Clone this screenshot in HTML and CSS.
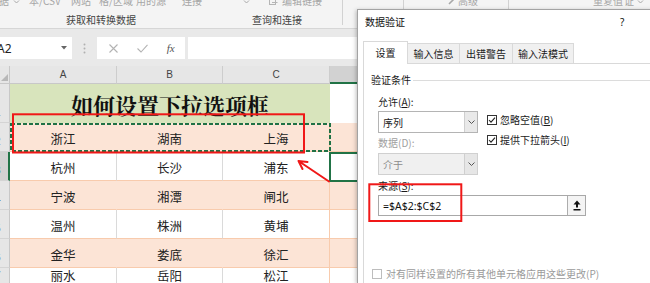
FILE: index.html
```html
<!DOCTYPE html>
<html lang="zh-CN">
<head>
<meta charset="utf-8">
<title>数据验证</title>
<link rel="stylesheet" href="styles.css">
</head>
<body>
<header class="ribbon">
  <div class="grp g1">
    <div class="rtop">
      <span class="ri t-ju">据</span>
      <svg class="ri chev t-ch1" width="8" height="12" viewBox="0 0 8 12"><path d="M1 5.5 L3.5 8 L6 5.5" fill="none" stroke="#a8a8a8"/></svg>
      <span class="ri t-csv">本/CSV</span>
      <span class="ri t-web">网站</span>
      <span class="ri t-rng">格/区域</span>
      <span class="ri t-src">用的源</span>
      <span class="ri t-con">连接</span>
    </div>
    <div class="rlabel">获取和转换数据</div>
  </div>
  <div class="grp g2">
    <div class="rtop">
      <svg class="ri chev t-ch2" width="8" height="12" viewBox="0 0 8 12"><path d="M1 5.5 L3.5 8 L6 5.5" fill="none" stroke="#a8a8a8"/></svg>
      <svg class="ri t-lnk" width="9" height="12" viewBox="0 0 9 12"><rect x="0.5" y="2.5" width="6" height="7" fill="none" stroke="#b5b5b5"/><path d="M3 7.5 H8.5" stroke="#b5b5b5"/></svg>
      <span class="ri t-edit">编辑链接</span>
    </div>
    <div class="rlabel">查询和连接</div>
  </div>
  <div class="grp g3">
    <div class="rtop">
      <span class="ri t-sep"></span>
      <svg class="ri t-pen" width="8" height="12" viewBox="0 0 8 12"><path d="M1 9 L6.5 3.5" stroke="#a8a8a8" stroke-width="1.6"/></svg>
      <span class="ri t-adv">高级</span>
    </div>
  </div>
  <div class="grp g4">
    <div class="rtop">
      <span class="ri t-dup">重复值</span>
      <span class="ri t-zh">证</span>
      <svg class="ri chev t-ch3" width="8" height="12" viewBox="0 0 8 12"><path d="M1 5.5 L3.5 8 L6 5.5" fill="none" stroke="#a8a8a8"/></svg>
    </div>
  </div>
</header>

<div class="fbar">
  <div class="namebox">
    <span class="nm">A2</span>
    <svg width="6" height="4" viewBox="0 0 6 4"><path d="M0 0 H6 L3 3.5 Z" fill="#666"/></svg>
  </div>
  <div class="fdots">
    <svg width="3" height="11" viewBox="0 0 3 11"><circle cx="1.5" cy="1.5" r="1" fill="#b0b0b0"/><circle cx="1.5" cy="5.5" r="1" fill="#b0b0b0"/><circle cx="1.5" cy="9.5" r="1" fill="#b0b0b0"/></svg>
  </div>
  <div class="fxbox">
    <span class="fxi"><svg width="9" height="9" viewBox="0 0 9 9"><path d="M0.5 0.5 L8.5 8.5 M8.5 0.5 L0.5 8.5" stroke="#b3b3b3" stroke-width="1.1"/></svg></span>
    <span class="fxi"><svg width="11" height="9" viewBox="0 0 11 9"><path d="M0.5 4.5 L4 8 L10.5 0.8" fill="none" stroke="#b3b3b3" stroke-width="1.1"/></svg></span>
    <span class="fxi fx">fx</span>
  </div>
  <div class="fin"></div>
</div>

<main class="sheet">
  <div class="corner"><svg width="7" height="7" viewBox="0 0 7 7"><path d="M7 0 V7 H0 Z" fill="#b8b8b8"/></svg></div>
  <div class="ch">A</div>
  <div class="ch">B</div>
  <div class="ch">C</div>
  <div class="ch chsel"></div>

  <div class="rh"><span>1</span></div>
  <div class="title">如何设置下拉选项框</div>
  <div class="c d dw"></div>

  <div class="rh"><span>2</span></div>
  <div class="c pe">浙江</div>
  <div class="c pe">湖南</div>
  <div class="c pe cc">上海</div>
  <div class="c pe d"></div>

  <div class="rh rhsel"><span>3</span></div>
  <div class="c">杭州</div>
  <div class="c">长沙</div>
  <div class="c cc">浦东</div>
  <div class="c d"></div>

  <div class="rh"><span>4</span></div>
  <div class="c pe">宁波</div>
  <div class="c pe">湘潭</div>
  <div class="c pe cc">闸北</div>
  <div class="c pe d"></div>

  <div class="rh"><span>5</span></div>
  <div class="c">温州</div>
  <div class="c">株洲</div>
  <div class="c cc">黄埔</div>
  <div class="c d"></div>

  <div class="rh"><span>6</span></div>
  <div class="c pe">金华</div>
  <div class="c pe">娄底</div>
  <div class="c pe cc">徐汇</div>
  <div class="c pe d"></div>

  <div class="rh rh7"><span>7</span></div>
  <div class="c r7">丽水</div>
  <div class="c r7">岳阳</div>
  <div class="c r7 cc">松江</div>
  <div class="c d r7"></div>
</main>

<svg class="ovl-sheet" width="650" height="283" viewBox="0 0 650 283">
  <rect x="11" y="124" width="319" height="27" fill="none" stroke="#1f7145" stroke-width="2" stroke-dasharray="4 2"/>
  <rect x="330" y="153" width="40" height="28" fill="none" stroke="#217346" stroke-width="2"/>
</svg>

<section class="dlg">
  <div class="dtitle"><span>数据验证</span><span class="dq">?</span></div>
  <div class="tabs">
    <div class="tab on w1">设置</div>
    <div class="tab w2">输入信息</div>
    <div class="tab w3">出错警告</div>
    <div class="tab w4">输入法模式</div>
  </div>
  <div class="panel">
    <div class="ghead"><span>验证条件</span><i class="gline"></i></div>
    <div class="form">
      <div class="lbl first">允许(<u>A</u>):</div>
      <div class="frow">
        <div class="lcol">
          <div class="sel"><span class="sv">序列</span><span class="sb"><svg width="7" height="4" viewBox="0 0 7 4"><path d="M0.5 0.5 L3.5 3.5 L6.5 0.5" fill="none" stroke="#555"/></svg></span></div>
          <div class="lbl dis gap4">数据(D):</div>
          <div class="sel seldis gap4"><span class="sv">介于</span><span class="sb"><svg width="7" height="4" viewBox="0 0 7 4"><path d="M0.5 0.5 L3.5 3.5 L6.5 0.5" fill="none" stroke="#555"/></svg></span></div>
        </div>
        <div class="rcol">
          <div class="chk"><svg width="10" height="10" viewBox="0 0 10 10"><rect x="0.5" y="0.5" width="9" height="9" fill="#fff" stroke="#333"/><path d="M2 5 L4 7.2 L8 2.6" fill="none" stroke="#222" stroke-width="1.1"/></svg><span>忽略空值(<u>B</u>)</span></div>
          <div class="chk chk2"><svg width="10" height="10" viewBox="0 0 10 10"><rect x="0.5" y="0.5" width="9" height="9" fill="#fff" stroke="#333"/><path d="M2 5 L4 7.2 L8 2.6" fill="none" stroke="#222" stroke-width="1.1"/></svg><span>提供下拉箭头(<u>I</u>)</span></div>
        </div>
      </div>
      <div class="lbl srcl">来源(<u>S</u>):</div>
      <div class="src">
        <span class="sval">=$A$2:$C$2</span>
        <span class="sbtn"><svg width="8" height="11" viewBox="0 0 8 11"><path d="M4 0.5 L7.5 4.5 H5 V7.5 H3 V4.5 H0.5 Z" fill="#111"/><rect x="0.5" y="9" width="7" height="1.5" fill="#111"/></svg></span>
      </div>
      <div class="chk bchk"><svg width="10" height="10" viewBox="0 0 10 10"><rect x="0.5" y="0.5" width="9" height="9" fill="#fff" stroke="#bdbdbd"/></svg><span>对有同样设置的所有其他单元格应用这些更改(P)</span></div>
    </div>
  </div>
</section>

<svg class="ovl-ann" width="650" height="283" viewBox="0 0 650 283">
  <rect x="13" y="114.3" width="291" height="38.2" fill="none" stroke="#f01818" stroke-width="2"/>
  <path d="M329 181.5 L298.5 161 M298.5 161 L307.5 162 M298.5 161 L302.5 169" fill="none" stroke="#f01818" stroke-width="2" stroke-linecap="round"/>
  <rect x="369.3" y="184.3" width="92" height="36.7" fill="none" stroke="#f01818" stroke-width="2"/>
</svg>
</body>
</html>
```

FILE: styles.css
```css
* { box-sizing: border-box; margin: 0; padding: 0; }
html, body { width: 650px; height: 283px; overflow: hidden; }
body {
  position: relative;
  background: #e9e9e9;
  font-family: "Noto Sans CJK SC", "Noto Sans", sans-serif;
  font-size: 10px;
  color: #222;
}

/* ribbon */
.ribbon {
  display: flex;
  height: 29px;
  background: #f4f4f4;
  border-bottom: 1px solid #d6d6d6;
  overflow: hidden;
}
.grp { flex: none; height: 25px; display: flex; flex-direction: column; }
.g1 { width: 212px; padding-right: 10px; }
.g2 { width: 131px; border-right: 1px solid #d2d2d2; }
.g3 { width: 166px; border-right: 1px solid #d2d2d2; }
.g4 { flex: 1; }
.rtop {
  display: flex;
  height: 12px;
  margin-top: -5px;
  line-height: 12px;
  color: #a6a6a6;
  white-space: nowrap;
}
.ri { flex: none; display: block; }
.rlabel {
  margin-top: 7px;
  height: 12px;
  line-height: 12px;
  text-align: center;
  color: #444;
  white-space: nowrap;
}
.t-ju { margin-left: -1px; width: 10px; }
.t-ch1 { margin-left: 4px; }
.t-csv { margin-left: 8px; width: 34px; }
.t-web { margin-left: 8px; width: 20px; }
.t-rng { margin-left: 8px; width: 35px; }
.t-src { margin-left: 2px; width: 30px; }
.t-con { margin-left: 16px; width: 20px; }
.t-ch2 { margin-left: 31px; }
.t-lnk { margin-left: 18px; }
.t-edit { margin-left: 4px; width: 40px; }
.t-sep { margin-left: 60px; width: 1px; height: 14px; background: #d2d2d2; }
.t-pen { margin-left: 44px; }
.t-adv { margin-left: 2px; width: 22px; }
.t-dup { margin-left: 84px; width: 30px; }
.t-zh { margin-left: 1px; width: 10px; }
.t-ch3 { margin-left: 3px; }

/* formula bar */
.fbar { display: flex; height: 22px; margin-top: 8px; }
.namebox {
  width: 72px;
  background: #fff;
  display: flex;
  align-items: center;
  justify-content: space-between;
  padding-right: 5px;
  font-family: "Noto Sans", sans-serif;
  font-size: 12px;
  color: #222;
  overflow: hidden;
}
.nm { margin-left: -3px; }
.fdots { width: 25px; display: flex; align-items: center; justify-content: center; }
.fxbox { width: 88px; background: #fff; display: flex; align-items: center; padding-left: 2px; }
.fxi { width: 29px; display: flex; align-items: center; justify-content: center; }
.fx {
  font-family: "Liberation Serif", serif;
  font-style: italic;
  font-size: 11px;
  color: #555;
}
.fin { flex: 1; margin-left: 3px; background: #fff; }

/* sheet */
.sheet {
  display: grid;
  grid-template-columns: 10px 107px 106px 107px 1fr;
  grid-template-rows: 18px 39px repeat(5, 29px) 15px;
  margin-top: 7px;
}
.corner {
  background: #e6e6e6;
  border-right: 1px solid #c8c8c8;
  border-bottom: 1px solid #c8c8c8;
  display: flex;
  align-items: flex-end;
  justify-content: flex-end;
  padding: 0 1px 2px 0;
}
.ch {
  background: #e6e6e6;
  border-right: 1px solid #cdcdcd;
  border-bottom: 1px solid #c8c8c8;
  display: flex;
  align-items: center;
  justify-content: center;
  font-family: "Liberation Sans", sans-serif;
  font-size: 10px;
  color: #444;
}
.chsel { background: #d2d2d2; border-right: none; border-bottom: 2px solid #217346; }
.rh {
  background: #e6e6e6;
  border-right: 1px solid #c8c8c8;
  border-bottom: 1px solid #d4d4d4;
  display: flex;
  align-items: flex-end;
  padding-bottom: 4px;
  overflow: hidden;
  font-family: "Liberation Sans", sans-serif;
  font-size: 10px;
  line-height: 11px;
  color: #444;
}
.rh span { margin-left: -5px; }
.rh7 { align-items: flex-start; padding: 2px 0 0; border-bottom: none; }
.rhsel { background: #d2d2d2; color: #217346; border-right: 2px solid #217346; }
.title {
  grid-column: span 3;
  background: #d8e4bc;
  display: flex;
  align-items: center;
  justify-content: center;
  padding-top: 2px;
  font-family: "Noto Serif CJK SC", "Noto Sans CJK SC", serif;
  font-size: 22px;
  font-weight: 700;
  color: #111;
}
.c {
  display: flex;
  align-items: center;
  justify-content: center;
  padding-top: 2px;
  background: #fff;
  border-right: 1px solid #dadada;
  border-bottom: 1px solid #f8cbad;
  font-size: 12.5px;
  color: #222;
}
.pe { background: #fce4d6; border-right-color: #fce4d6; }
.cc { border-right-color: #f8cbad; }
.d { border-right: none; }
.dw { border-bottom: none; }
.r7 { align-items: flex-start; padding-top: 1px; border-bottom: none; line-height: 14px; }

.ovl-sheet { position: absolute; left: 0; top: 0; z-index: 2; pointer-events: none; }
.ovl-ann { position: absolute; left: 0; top: 0; z-index: 10; pointer-events: none; }

/* dialog */
.dlg {
  position: absolute;
  left: 357px;
  top: 9px;
  width: 310px;
  height: 274px;
  z-index: 5;
  background: #fff;
  border: 1px solid #a3a3a3;
  border-bottom: none;
  box-shadow: -1px 1px 4px rgba(0, 0, 0, 0.25);
  color: #1a1a1a;
  overflow: hidden;
}
.dtitle {
  height: 23px;
  display: flex;
  align-items: center;
  padding-left: 7px;
  font-size: 10px;
  color: #111;
}
.dq { margin-left: auto; margin-right: 40px; width: 6px; font-family: "Noto Sans", sans-serif; }
.tabs { display: flex; align-items: flex-end; height: 22px; margin: 8px 0 0 5px; position: relative; z-index: 1; }
.tab {
  height: 20px;
  background: #f0f0f0;
  border: 1px solid #d9d9d9;
  border-left: none;
  border-bottom: none;
  display: flex;
  align-items: center;
  justify-content: center;
  white-space: nowrap;
}
.tab.on { height: 23px; margin-bottom: -1px; background: #fff; border-left: 1px solid #d9d9d9; padding-bottom: 1px; }
.w1 { width: 45px; }
.w2 { width: 52px; }
.w3 { width: 53px; }
.w4 { width: 61px; }
.panel {
  margin-left: 5px;
  width: 300px;
  height: 220px;
  border: 1px solid #d9d9d9;
  border-bottom: none;
}
.ghead {
  display: flex;
  align-items: center;
  height: 12px;
  margin-top: 10px;
  padding-left: 7px;
  line-height: 12px;
}
.gline { flex: 1; height: 1px; margin-left: 2px; background: #dcdcdc; }
.form { padding-left: 14px; }
.lbl { height: 12px; line-height: 12px; white-space: nowrap; }
.lbl.first { margin-top: 10px; }
.lbl.dis { color: #a0a0a0; }
.gap4 { margin-top: 4px; }
.frow { display: flex; margin-top: 3px; }
.lcol { width: 100px; display: flex; flex-direction: column; }
.sel {
  height: 22px;
  display: flex;
  border: 1px solid #b4b4b4;
  background: #fff;
}
.sv { flex: 1; display: flex; align-items: center; padding-left: 4px; }
.sb {
  width: 13px;
  display: flex;
  align-items: center;
  justify-content: center;
  background: #e9e9e9;
  border-left: 1px solid #cfcfcf;
}
.seldis { background: #f0f0f0; border-color: #d0d0d0; color: #8c8c8c; }
.seldis .sb { background: #e6e6e6; }
.rcol { margin-left: 9px; padding-top: 4px; display: flex; flex-direction: column; }
.chk { display: flex; align-items: center; height: 10px; white-space: nowrap; }
.chk svg { flex: none; }
.chk span { margin-left: 3px; line-height: 12px; }
.chk2 { margin-top: 10px; }
.srcl { margin-top: 5px; }
.src {
  width: 208px;
  height: 21px;
  margin-top: 3px;
  display: flex;
  border: 1px solid #a8a8a8;
  background: #fff;
}
.sval {
  flex: 1;
  display: flex;
  align-items: center;
  padding-left: 4px;
  font-family: "Noto Sans", sans-serif;
  font-size: 10.5px;
  color: #111;
}
.sbtn {
  width: 18px;
  display: flex;
  align-items: center;
  justify-content: center;
  border-left: 1px solid #adadad;
  background: #f4f4f4;
}
.bchk { margin-top: 53px; margin-left: -6px; color: #9a9a9a; }
.bchk span { margin-left: 4px; }
```
